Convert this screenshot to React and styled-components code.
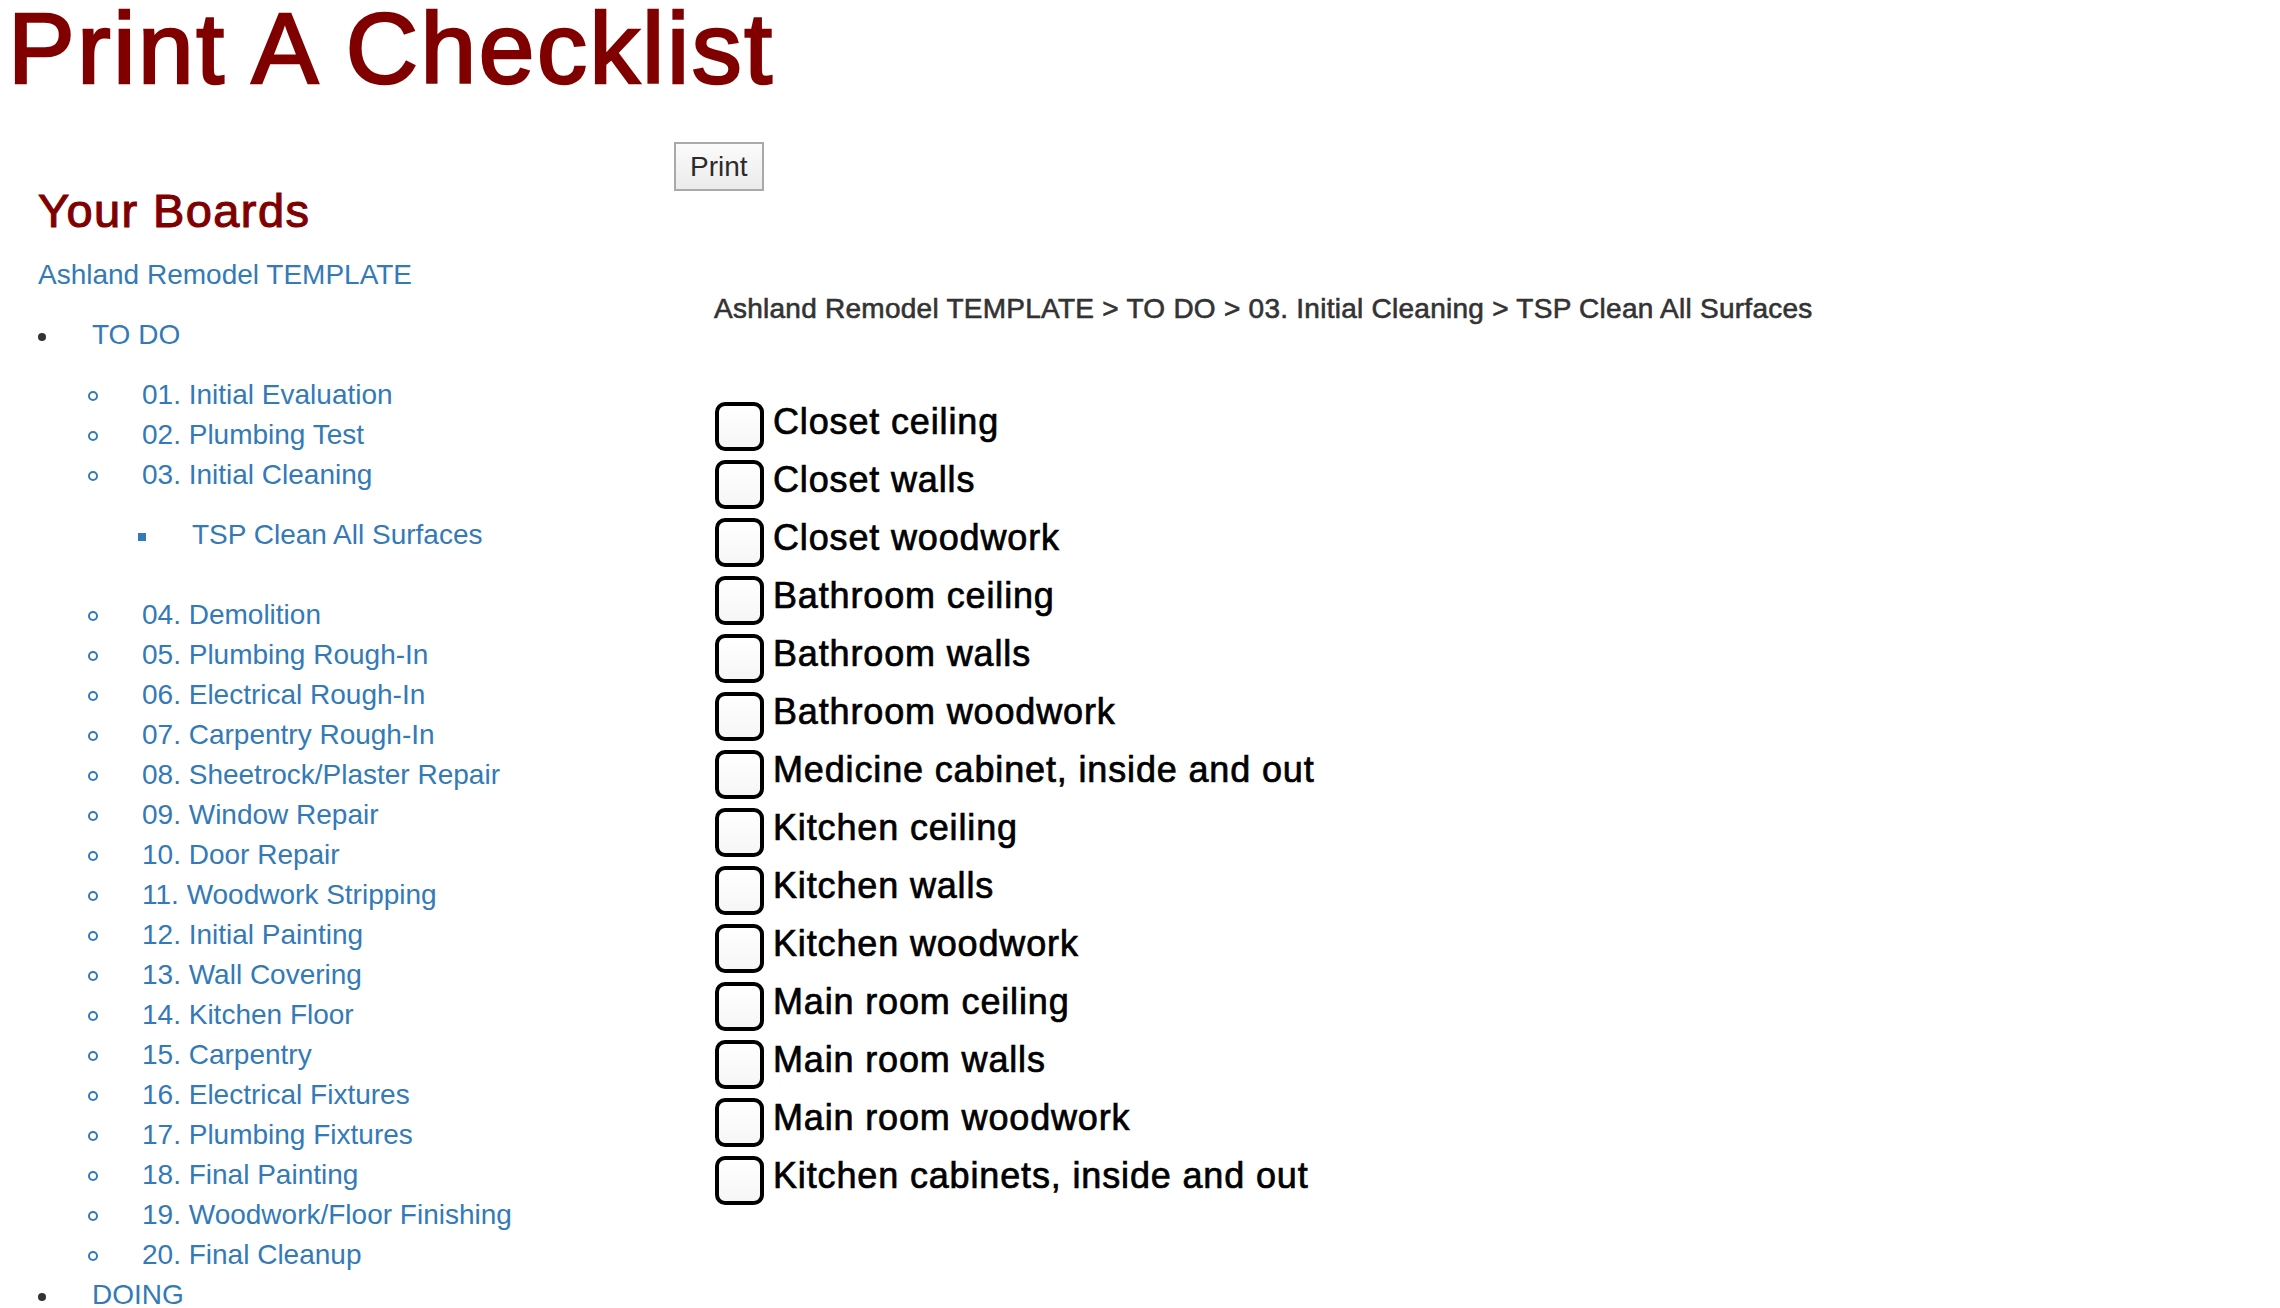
import React from "react";
import styled, { createGlobalStyle } from "styled-components";

const GlobalStyle = createGlobalStyle`
  html, body {
    margin: 0;
    padding: 0;
    background: #ffffff;
  }
  body {
    font-family: "Liberation Sans", Arial, Helvetica, sans-serif;
    font-size: 28px;
    line-height: 40px;
    color: #333333;
  }
  * { box-sizing: border-box; }
`;

const Page = styled.div`
  padding: 0 8px;
`;

const Title = styled.h1`
  margin: 0 0 46px;
  font-size: 100px;
  line-height: 96px;
  font-weight: 400;
  letter-spacing: 2.6px;
  color: #800000;
  -webkit-text-stroke: 2.6px #800000;
  white-space: nowrap;
`;

const Layout = styled.div`
  display: grid;
  grid-template-columns: 636px 1fr;
  align-items: start;
`;

const Sidebar = styled.aside`
  padding-left: 30px;
`;

const Main = styled.main`
  padding-left: 30px;
`;

const SectionHeading = styled.h3`
  margin: 42.5px 0 18px;
  font-size: 47px;
  line-height: 52px;
  font-weight: 400;
  letter-spacing: 1.4px;
  color: #800000;
  -webkit-text-stroke: 1.1px #800000;
`;

const Link = styled.a`
  color: #337ab7;
  text-decoration: none;
  white-space: nowrap;
  cursor: pointer;
`;

const BoardLink = styled(Link)`
  display: block;
  height: 40px;
  margin-bottom: 20px;
`;

const TreeList = styled.ul`
  list-style: none;
  margin: ${(p) => p.$margin || "0"};
  padding: 0 0 0 ${(p) => p.$indent || 0}px;
`;

const TreeItem = styled.li`
  display: block;
`;

const TreeRow = styled.div`
  display: flex;
  align-items: flex-start;
  height: 40px;
`;

const MarkerSlot = styled.span`
  flex: none;
  width: 54px;
  height: 40px;
`;

const Marker = styled.span`
  display: block;
  ${(p) =>
    p.$kind === "disc"
      ? `width: 8px; height: 8px; margin-top: 18px; border-radius: 50%; background: #333333;`
      : p.$kind === "circle"
      ? `width: 10px; height: 10px; margin-top: 16.5px; margin-left: -0.5px; border-radius: 50%; border: 2px solid #337ab7;`
      : `width: 8px; height: 8px; margin-top: 18px; background: #337ab7;`}
`;

const PrintButton = styled.button`
  display: block;
  height: 49px;
  margin: 0;
  padding: 0 14px;
  border: 2px solid #a9a9a9;
  border-radius: 0;
  background: linear-gradient(#fbfbfb, #ebebeb);
  font-family: "Liberation Sans", Arial, sans-serif;
  font-size: 28px;
  line-height: 45px;
  color: #2b2b2b;
`;

const Breadcrumb = styled.h5`
  margin: 101.5px 0 78.5px;
  padding-left: 40px;
  font-size: 28px;
  line-height: 31px;
  font-weight: 400;
  letter-spacing: 0.26px;
  color: #333333;
  -webkit-text-stroke: 0.6px #333333;
  white-space: nowrap;
`;

const Checklist = styled.ul`
  list-style: none;
  margin: 0;
  padding: 0 0 0 41px;
`;

const CheckRow = styled.li`
  display: flex;
  align-items: flex-start;
  height: 58px;
`;

const CheckBox = styled.input`
  appearance: none;
  -webkit-appearance: none;
  flex: none;
  width: 49px;
  height: 49px;
  margin: 0 9px 0 0;
  border: 4.5px solid #000000;
  border-radius: 10px;
  background: linear-gradient(#ffffff, #f6f6f6);
`;

const CheckLabel = styled.label`
  font-size: 36px;
  line-height: 40px;
  letter-spacing: 0.85px;
  color: #000000;
  -webkit-text-stroke: 0.7px #000000;
  white-space: nowrap;
`;

const tree = [
  {
    name: "TO DO",
    children: [
      { name: "01. Initial Evaluation" },
      { name: "02. Plumbing Test" },
      { name: "03. Initial Cleaning", children: [{ name: "TSP Clean All Surfaces" }] },
      { name: "04. Demolition" },
      { name: "05. Plumbing Rough-In" },
      { name: "06. Electrical Rough-In" },
      { name: "07. Carpentry Rough-In" },
      { name: "08. Sheetrock/Plaster Repair" },
      { name: "09. Window Repair" },
      { name: "10. Door Repair" },
      { name: "11. Woodwork Stripping" },
      { name: "12. Initial Painting" },
      { name: "13. Wall Covering" },
      { name: "14. Kitchen Floor" },
      { name: "15. Carpentry" },
      { name: "16. Electrical Fixtures" },
      { name: "17. Plumbing Fixtures" },
      { name: "18. Final Painting" },
      { name: "19. Woodwork/Floor Finishing" },
      { name: "20. Final Cleanup" },
    ],
  },
  { name: "DOING" },
];

const checklist = [
  "Closet ceiling",
  "Closet walls",
  "Closet woodwork",
  "Bathroom ceiling",
  "Bathroom walls",
  "Bathroom woodwork",
  "Medicine cabinet, inside and out",
  "Kitchen ceiling",
  "Kitchen walls",
  "Kitchen woodwork",
  "Main room ceiling",
  "Main room walls",
  "Main room woodwork",
  "Kitchen cabinets, inside and out",
];

const levels = [
  { kind: "disc", indent: 0, margin: "0" },
  { kind: "circle", indent: 50, margin: "20px 0 0" },
  { kind: "square", indent: 50, margin: "20px 0 40px" },
];

function Tree({ items, level }) {
  const cfg = levels[level];
  return (
    <TreeList $indent={cfg.indent} $margin={cfg.margin}>
      {items.map((item) => (
        <TreeItem key={item.name}>
          <TreeRow>
            <MarkerSlot>
              <Marker $kind={cfg.kind} />
            </MarkerSlot>
            <Link>{item.name}</Link>
          </TreeRow>
          {item.children && <Tree items={item.children} level={level + 1} />}
        </TreeItem>
      ))}
    </TreeList>
  );
}

export default function App() {
  return (
    <Page>
      <GlobalStyle />
      <Title>Print A Checklist</Title>
      <Layout>
        <Sidebar>
          <SectionHeading>Your Boards</SectionHeading>
          <BoardLink>Ashland Remodel TEMPLATE</BoardLink>
          <Tree items={tree} level={0} />
        </Sidebar>
        <Main>
          <PrintButton type="button">Print</PrintButton>
          <Breadcrumb>
            Ashland Remodel TEMPLATE &gt; TO DO &gt; 03. Initial Cleaning &gt; TSP Clean All Surfaces
          </Breadcrumb>
          <Checklist>
            {checklist.map((text, i) => (
              <CheckRow key={text}>
                <CheckBox type="checkbox" id={`item-${i}`} />
                <CheckLabel htmlFor={`item-${i}`}>{text}</CheckLabel>
              </CheckRow>
            ))}
          </Checklist>
        </Main>
      </Layout>
    </Page>
  );
}
